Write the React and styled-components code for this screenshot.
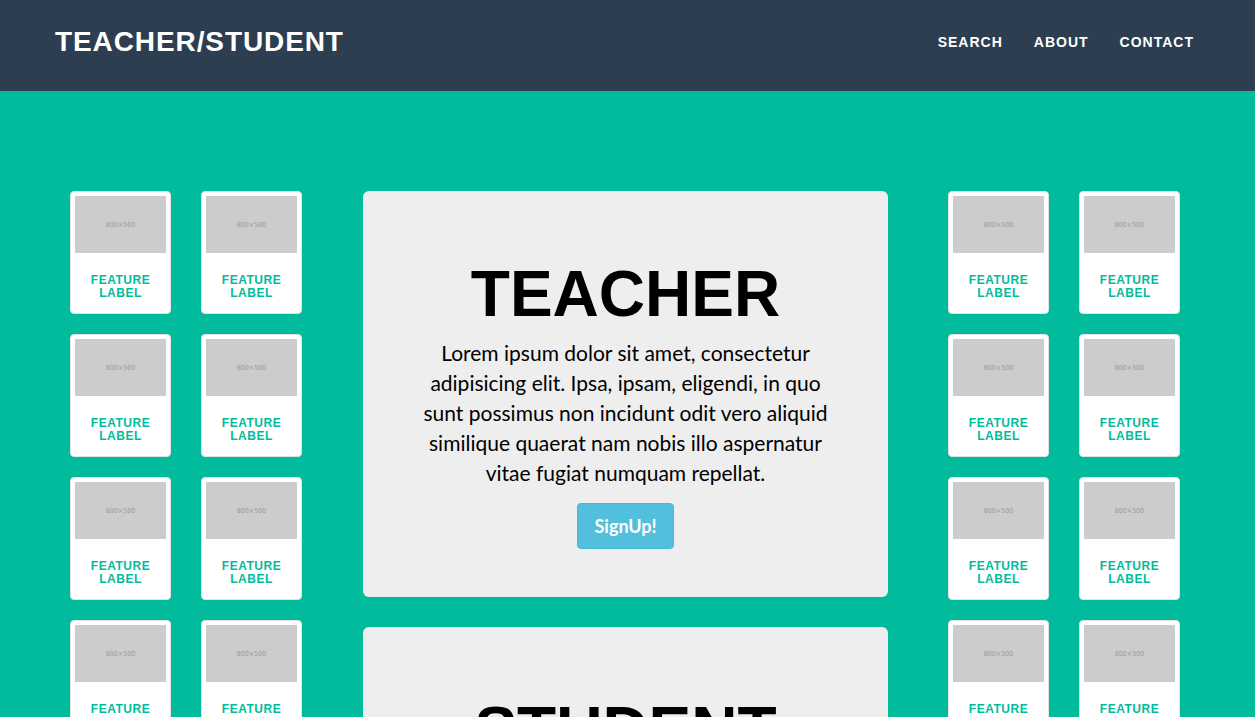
import styled, { createGlobalStyle } from "styled-components";

const GlobalStyle = createGlobalStyle`
    html, body {
        margin: 0;
        padding: 0;
        background: #00bc9c;
        font-family: Lato, "Liberation Sans", sans-serif;
        overflow: hidden;
    }
`;

const features = [1, 2, 3, 4];

function FeatureCard() {
    return (
        <Card>
            <Placeholder>800×500</Placeholder>
            <Label>
                Feature
                <br />
                Label
            </Label>
        </Card>
    );
}

function FeatureColumn() {
    return (
        <Column>
            {features.map((n) => (
                <FeatureCard key={n} />
            ))}
        </Column>
    );
}

function RolePanel({ title }) {
    return (
        <Panel>
            <PanelTitle>{title}</PanelTitle>
            <PanelText>
                Lorem ipsum dolor sit amet, consectetur adipisicing elit. Ipsa,
                ipsam, eligendi, in quo sunt possimus non incidunt odit vero
                aliquid similique quaerat nam nobis illo aspernatur vitae fugiat
                numquam repellat.
            </PanelText>
            <SignUp>SignUp!</SignUp>
        </Panel>
    );
}

export default function App() {
    return (
        <>
            <GlobalStyle />
            <Navbar>
                <Brand>Teacher/Student</Brand>
                <NavLinks>
                    <NavLink>Search</NavLink>
                    <NavLink>About</NavLink>
                    <NavLink>Contact</NavLink>
                </NavLinks>
            </Navbar>
            <Main>
                <Side>
                    <FeatureColumn />
                    <FeatureColumn />
                </Side>
                <Center>
                    <RolePanel title="TEACHER" />
                    <RolePanel title="STUDENT" />
                </Center>
                <Side>
                    <FeatureColumn />
                    <FeatureColumn />
                </Side>
            </Main>
        </>
    );
}

const Navbar = styled.nav`
    height: 91px;
    background: #2c3e50;
    display: flex;
    align-items: center;
    justify-content: space-between;
    padding: 0 61px 8px 55px;
    box-sizing: border-box;
`;

const Brand = styled.div`
    color: #fff;
    font-family: "Liberation Sans", Arial, sans-serif;
    font-weight: 700;
    font-size: 28px;
    letter-spacing: 0.9px;
    text-transform: uppercase;
`;

const NavLinks = styled.div`
    display: flex;
    gap: 31px;
`;

const NavLink = styled.a`
    color: #fff;
    font-family: "Liberation Sans", Arial, sans-serif;
    font-weight: 700;
    font-size: 14px;
    letter-spacing: 1px;
    text-transform: uppercase;
`;

const Main = styled.main`
    display: flex;
    align-items: flex-start;
    gap: 60px;
    padding: 100px 0 0 70px;
`;

const Side = styled.div`
    display: flex;
    gap: 30px;
`;

const Column = styled.div`
    display: flex;
    flex-direction: column;
    gap: 20px;
`;

const Card = styled.div`
    width: 101px;
    height: 123px;
    box-sizing: border-box;
    background: #fff;
    border: 1px solid #e2e2e2;
    border-radius: 4px;
    padding: 4px;
`;

const Placeholder = styled.div`
    height: 57px;
    background: #cccccc;
    color: #9a9a9a;
    font-family: "DejaVu Sans Condensed", "Liberation Sans Narrow", sans-serif;
    font-size: 7px;
    display: flex;
    align-items: center;
    justify-content: center;
`;

const Label = styled.div`
    margin-top: 21px;
    color: #00bc9c;
    font-family: "Liberation Sans", Arial, sans-serif;
    font-weight: 700;
    font-size: 12px;
    line-height: 13px;
    letter-spacing: 0.5px;
    text-align: center;
    text-transform: uppercase;
`;

const Center = styled.div`
    display: flex;
    flex-direction: column;
    gap: 30px;
    margin-left: 1px;
`;

const Panel = styled.section`
    width: 525px;
    box-sizing: border-box;
    background: #eeeeee;
    border-radius: 6px;
    padding: 68px 40px 48px;
    display: flex;
    flex-direction: column;
    align-items: center;
`;

const PanelTitle = styled.h1`
    margin: 0;
    font-family: "Liberation Sans", Arial, sans-serif;
    font-weight: 700;
    font-size: 64px;
    line-height: 70px;
    color: #000;
`;

const PanelText = styled.p`
    margin: 9px 0 0;
    width: 430px;
    font-family: Lato, "Liberation Sans", sans-serif;
    font-size: 21px;
    line-height: 30px;
    color: #000;
    text-align: center;
`;

const SignUp = styled.button`
    margin-top: 15px;
    height: 46px;
    padding: 0 16px;
    background: #52c0dc;
    border: 1px solid #46b8da;
    border-radius: 4px;
    color: #fff;
    font-family: Lato, "Liberation Sans", sans-serif;
    font-weight: 700;
    font-size: 18px;
`;
